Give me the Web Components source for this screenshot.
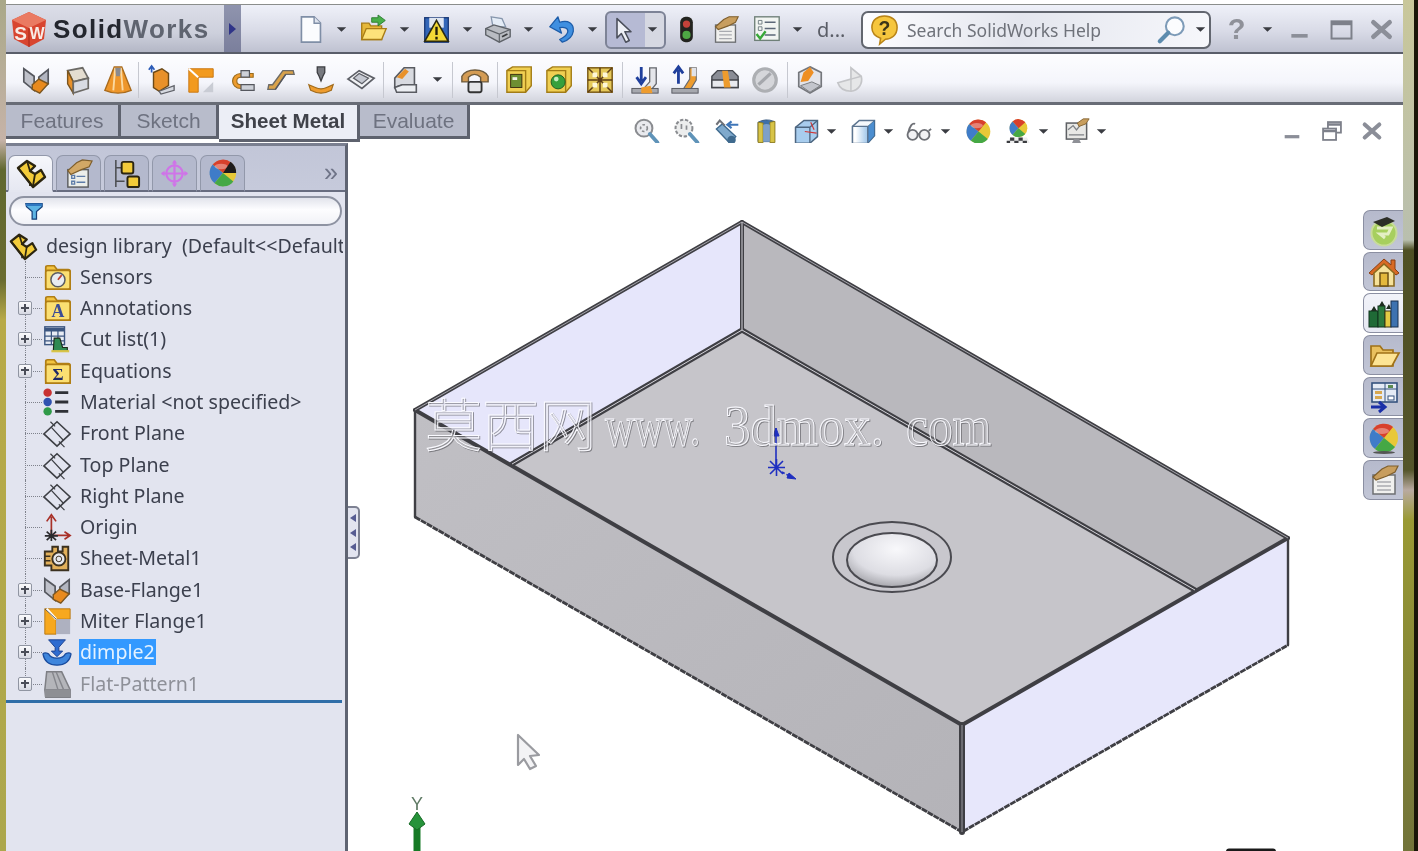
<!DOCTYPE html>
<html lang="en">
<head>
<meta charset="utf-8">
<title>SolidWorks</title>
<style>
  html, body { margin: 0; height: 100%; overflow: hidden; }
  body {
    font-family: "Liberation Sans", Arial, sans-serif;
    background:
      linear-gradient(#1a1608, #1a1608) right top / 4px 100% no-repeat,
      linear-gradient(#c9c79a 0, #b9bfae 240px, #4f5024 250px, #54552a 470px, #b9aaa0 490px, #9a9a34 520px, #72743a 851px) right top / 15px 100% no-repeat,
      linear-gradient(#a9a888 0, #c6b3a8 140px, #60682f 170px, #6a6c30 280px, #b8aa48 320px, #aca74c 851px) left top / 6px 100% no-repeat,
      #a9a878;
  }
</style>
</head>
<body>
<sw-app></sw-app>
<script>
const PART = `<path d="M3 11 12 4l8 5-5 5 5 3 6-4 4 7-12 10Z" fill="#f2cb3a" stroke="#2b2510" stroke-width="2.4" stroke-linejoin="round"/><path d="M3 11l12 15v3M12 4l3 10M20 17l-2 12" fill="none" stroke="#2b2510" stroke-width="1.8"/>`;
const BALL = `<circle cx="16" cy="16" r="14" fill="#e8c838"/><path d="M16 16 5 7A14 14 0 0 1 25 5Z" fill="#d8402c"/><path d="M16 16 5 7A14 14 0 0 0 7 27Z" fill="#3f7cc8"/><path d="M16 16 7 27A14 14 0 0 0 27 25Z" fill="#45a845"/><ellipse cx="14" cy="9" rx="7" ry="3" fill="#fff" opacity=".35"/>`;
const FOLDER = `<path d="M4 29V6q0-2 2-2h7l3 4h12q2 0 2 2v19Z" fill="#f3c440" stroke="#b07e14" stroke-width="1.8"/><rect x="4" y="9" width="26" height="20" rx="2" fill="#fbdf72" stroke="#b07e14" stroke-width="1.8"/>`;
const PLANE = `<path d="M16 4 30 17 16 30 2 17Z" fill="none" stroke="#3d3f44" stroke-width="1.7"/><path d="M9 4 14 9M18 25l6 6M10 10 23 24" stroke="#3d3f44" stroke-width="1.3"/>`;
const FLANGE = `<path d="M3 4 14 12V27L3 18Z" fill="#bfc1ca" stroke="#55575e" stroke-width="1.8"/><path d="M29 5 19 13V27L29 20Z" fill="#b2b5c0" stroke="#55575e" stroke-width="1.8"/><path d="M12 21 19 15 29 20 20 30 12 26Z" fill="#e88a1e" stroke="#7a5520" stroke-width="1.5"/>`;
const CARET_SVG = `<path d="M4 6 16 6 10 12Z" fill="#3a3c42"/>`;

const ICONS = {
  "new": `<path d="M6 2H20L27 9V30H6Z" fill="#fbfcfe" stroke="#7f8ea6" stroke-width="1.8"/><path d="M20 2V9H27" fill="#dfe4ee" stroke="#7f8ea6" stroke-width="1.6"/>`,
  "open": `<path d="M3 27V9h8l2 3h12v15Z" fill="#e6b83a" stroke="#a87c16" stroke-width="1.5"/><path d="M3 27 8 15H30L25 27Z" fill="#fde27a" stroke="#a87c16" stroke-width="1.5"/><path d="M14 3h7V0l8 6-8 6V8h-7Z" fill="#48b04a" stroke="#2a7a30"/>`,
  "save": `<rect x="3" y="3" width="26" height="27" fill="#3366b8" stroke="#1b3a78" stroke-width="1.5"/><rect x="8" y="3" width="16" height="11" fill="#dfe6f2"/><path d="M16 6 29 29H3Z" fill="#f3d935" stroke="#2c2a10" stroke-width="1.7"/><path d="M16 13v9M16 24v3" stroke="#221f0a" stroke-width="2.6"/>`,
  "print": `<path d="M9 2 21 4 25 13H11Z" fill="#e4ecf6" stroke="#8696ac" stroke-width="1.4"/><path d="M3 15 12 11 30 16V24L18 30 3 22Z" fill="#b9bcc2" stroke="#5e6268" stroke-width="1.5"/><path d="M3 15 18 21 30 16M18 21v9" fill="none" stroke="#5e6268" stroke-width="1.3"/><path d="M21 24l6-3" stroke="#3a3c40" stroke-width="2"/>`,
  "undo": `<path d="M3 13 12 2l2 6c9-3 16 1 15 10-1 6-6 10-12 12l-3-3c6-3 9-6 9-9 0-4-4-5-9-4l2 6Z" fill="#3f8fe0" stroke="#1d5ca8" stroke-width="1.4" stroke-linejoin="round"/>`,
  "select": `<path d="M8 3V25L13 20 18 30 22 28 17 18H24Z" fill="#eef0f6" stroke="#4a4e5a" stroke-width="1.8" stroke-linejoin="round"/>`,
  "light": `<rect x="9" y="2" width="14" height="28" rx="6" fill="#23241f"/><circle cx="16" cy="10" r="4" fill="#c4423a"/><circle cx="16" cy="22" r="4.5" fill="#4ea844"/>`,
  "options": `<rect x="5" y="11" width="22" height="19" fill="#f0f0ee" stroke="#6d6f72" stroke-width="1.5"/><path d="M9 18h14M9 22h14M9 26h14" stroke="#a9abb0" stroke-width="1.4"/><path d="M5 13 14 5 20 2 30 2 27 8 19 12 8 16Z" fill="#c89e5e" stroke="#7e5e2c" stroke-width="1.2"/>`,
  "checklist": `<rect x="3" y="2" width="27" height="26" fill="#f2f5f2" stroke="#6f8078" stroke-width="1.5"/><path d="M7 6h4v4H7ZM7 13h4v4H7Z" fill="none" stroke="#6d7a80"/><path d="M14 8h12M14 15h12M14 22h12" stroke="#5c6878" stroke-width="1.6"/><path d="M5 21 9 26 15 18" fill="none" stroke="#38a838" stroke-width="2.6"/>`,
  "helpbubble": `<path d="M3 14C3 6 9 2 16 2s13 4 13 12-6 12-12 12l-6 5 1-6C6 23 3 19 3 14Z" fill="#f6c63e" stroke="#b98418" stroke-width="1.6"/><text x="16" y="22" font-family="Liberation Sans" font-weight="700" font-size="20" text-anchor="middle" fill="#3c3418">?</text>`,
  "mag": `<circle cx="19" cy="12" r="9.5" fill="#fbfcfe" stroke="#7d9bb8" stroke-width="2.2"/><path d="M12 19 3 28" stroke="#5d8cae" stroke-width="4.5" stroke-linecap="round"/>`,
  "qmark": `<text x="16" y="27" font-family="Liberation Sans" font-weight="700" font-size="32" text-anchor="middle" fill="#8f9199">?</text>`,
  "min": `<path d="M7 23H25" stroke="#8b8e98" stroke-width="4"/>`,
  "max": `<rect x="5" y="7" width="22" height="19" fill="none" stroke="#7d808a" stroke-width="2.2"/><path d="M5 9H27" stroke="#7d808a" stroke-width="4.5"/>`,
  "close": `<path d="M7 8 25 24M25 8 7 24" stroke="#8b8e98" stroke-width="5" stroke-linecap="round"/>`,
  "restore": `<rect x="11" y="5" width="16" height="13" fill="none" stroke="#7d808a" stroke-width="2.2"/><rect x="5" y="13" width="16" height="14" fill="#fff" stroke="#7d808a" stroke-width="2.2"/><path d="M5 16H21M11 8H27" stroke="#7d808a" stroke-width="3"/>`,

  "baseflange": FLANGE,
  "extrude": `<path d="M6 6 22 3 28 14 12 18Z" fill="#e4ddd0" stroke="#6c6a66" stroke-width="1.8"/><path d="M6 6V20L12 30V18Z" fill="#e8912a" stroke="#7a5520" stroke-width="1.5"/><path d="M12 18 28 14V25L12 30Z" fill="#d8dbe2" stroke="#6c6a66" stroke-width="1.8"/>`,
  "loft": `<path d="M12 2H20L30 27Q16 33 2 27Z" fill="#ee962a" stroke="#a86a1c" stroke-width="1.5"/><path d="M13 3 11 27M19 3 21 27" stroke="#fbd9a0" stroke-width="2"/><path d="M13 3H19L18 12H14Z" fill="#8a8a8e"/>`,
  "edgeflange": `<path d="M8 8 17 4 24 9V22L14 28 8 24Z" fill="#e8912a" stroke="#6c4a18" stroke-width="1.5"/><path d="M14 28 30 22V27L16 31Z" fill="#d6d9e0" stroke="#5f6168" stroke-width="1.4"/><path d="M6 8V2M3 5 6 1 9 5" fill="none" stroke="#2c5cb8" stroke-width="1.8"/>`,
  "miter": `<path d="M3 4H29V13H13V29H3Z" fill="#f29a1e" stroke="#c9750f" stroke-width="1"/><path d="M3 4 13 13" stroke="#fff" stroke-width="2.2"/><path d="M18 29 29 18V29Z" fill="#c9ccd4"/>`,
  "hem": `<path d="M29 9H16C4 9 4 25 16 25H29V21H16C10 21 10 13 16 13H29Z" fill="#ee9c2e" stroke="#9a6c1c" stroke-width="1.2"/><path d="M16 6H25V13H16ZM16 21H30V27H16Z" fill="#cdd0d8" stroke="#55575e" stroke-width="1.3"/>`,
  "jog": `<path d="M2 26 10 26 21 10H30L29 6H18L7 21 3 21Z" fill="#d9a24a" stroke="#6c6a66" stroke-width="1.5"/><path d="M10 26 21 10" stroke="#55575e" stroke-width="1.5"/>`,
  "formtool": `<path d="M12 2H20V8L18 12 16 17 14 12 12 8Z" fill="#787a80" stroke="#3d3e42" stroke-width="1.4"/><path d="M3 21 10 24Q16 27 22 24L29 21 27 27Q16 33 5 27Z" fill="#ee9c2e" stroke="#a26c1c" stroke-width="1.3"/>`,
  "pyramid": `<path d="M2 15 14 6 30 14 17 25Z" fill="#f2f3f6" stroke="#5d5f66" stroke-width="1.8"/><path d="M8 14 14 9 24 14 17 20Z" fill="#c6c9d2" stroke="#5d5f66" stroke-width="1.3"/>`,
  "corner": `<path d="M4 14 14 3H25V21H12L4 24Z" fill="#d8dae0" stroke="#5a5c62" stroke-width="1.7"/><path d="M6 13 15 4 19 7 12 15Z" fill="#e8912a"/><path d="M4 24 12 21H27V29H6Z" fill="#eceef2" stroke="#5a5c62" stroke-width="1.7"/>`,
  "hook": `<path d="M2 12C7 3 25 3 30 12V18H22V13C18 9 13 9 9 13V18H2Z" fill="#d49c54" stroke="#6c5a3c" stroke-width="1.5"/><rect x="9" y="18" width="14" height="11" rx="2" fill="#e4e5e8" stroke="#333" stroke-width="2"/>`,
  "boxa": `<path d="M2 6 8 2H28V22L22 29H2Z" fill="#f0cf52" stroke="#a27c16" stroke-width="1.5"/><path d="M2 6H22V29" fill="none" stroke="#a27c16" stroke-width="1.5"/><rect x="6" y="10" width="12" height="14" fill="#6d8f32" stroke="#3c2f10"/><rect x="8" y="13" width="5" height="3" fill="#f3f3e8"/>`,
  "boxb": `<path d="M2 6 8 2H28V22L22 29H2Z" fill="#f0cf52" stroke="#a27c16" stroke-width="1.5"/><path d="M2 6H22V29" fill="none" stroke="#a27c16" stroke-width="1.5"/><circle cx="14" cy="18" r="7.5" fill="#37a03c" stroke="#1d5a22"/><circle cx="12" cy="15" r="2.5" fill="#c4eec0"/>`,
  "boxc": `<rect x="3" y="3" width="26" height="26" fill="#e6c95a" stroke="#7c5c18" stroke-width="1.6"/><path d="M3 3 29 29M29 3 3 29M16 3V29M3 16H29" stroke="#5e3c14" stroke-width="1.6"/><path d="M8 8h5v5H8ZM19 8h5v5h-5ZM8 19h5v5H8ZM19 19h5v5h-5Z" fill="#fff7d8"/>`,
  "bendd": `<path d="M12 2V17M7 13 12 20 17 13" fill="none" stroke="#1f3f9c" stroke-width="3"/><path d="M21 3H28V20L23 26H14L21 18Z" fill="#e4e5ea" stroke="#66686e" stroke-width="1.4"/><rect x="2" y="25" width="28" height="5" fill="#a6a8ae" stroke="#55575e"/><path d="M12 24 22 22 24 30H12Z" fill="#ee9c2e"/>`,
  "bendu": `<path d="M9 20V5M4 9 9 2 14 9" fill="none" stroke="#1f3f9c" stroke-width="3"/><path d="M21 3H28V16L22 26H14L21 15Z" fill="#ee9c2e" stroke="#66686e" stroke-width="1.2"/><path d="M23 3H28V12H23Z" fill="#e0e2e8"/><rect x="2" y="25" width="28" height="5" fill="#a6a8ae" stroke="#55575e"/>`,
  "rip": `<path d="M2 12 8 6H24L30 12V24H2Z" fill="#8a8d96" stroke="#44464c" stroke-width="1.5"/><path d="M2 16H30V24H2Z" fill="#e8e9ee" stroke="#44464c" stroke-width="1.5"/><path d="M13 6H19L22 24H15Z" fill="#ee9c2e"/>`,
  "disabled": `<circle cx="16" cy="16" r="12" fill="#d5d6da" stroke="#adafb3" stroke-width="3.4"/><path d="M9 21 22 9" stroke="#a5a7ac" stroke-width="3.4"/>`,
  "hexa": `<path d="M16 2 28 8V23L16 30 4 23V8Z" fill="#e3e4ea" stroke="#75777c" stroke-width="1.8"/><path d="M16 2 9 8 6 18 14 17 20 8Z" fill="#ee8f24"/><path d="M6 22 18 18 27 22 16 29Z" fill="#c3c5cc" stroke="#75777c"/>`,
  "ghost": `<path d="M3 19 17 15V3L28 12C30 20 25 27 17 28 10 28 5 25 3 19Z" fill="#e6e7e8" stroke="#c4c5c8" stroke-width="1.8"/><path d="M17 15 28 12M17 15V28" stroke="#c4c5c8" stroke-width="1.5"/>`,

  "zoomfit": `<circle cx="13" cy="12" r="10" fill="#e9eaee" stroke="#8a8c90" stroke-width="2.4"/><circle cx="13" cy="12" r="4" fill="none" stroke="#8a8c90" stroke-dasharray="3 2.5" stroke-width="2"/><path d="M20 19 29 29" stroke="#5f93b8" stroke-width="4.5" stroke-linecap="round"/>`,
  "zoomarea": `<circle cx="13" cy="12" r="10" fill="#eceded" stroke="#8a8c90" stroke-width="2.4" stroke-dasharray="4 2"/><path d="M10 7v6M16 9v5" stroke="#8a8c90" stroke-width="2"/><path d="M20 19 29 29" stroke="#5f93b8" stroke-width="4.5" stroke-linecap="round"/>`,
  "prevview": `<path d="M4 13 11 7 27 22 20 30Z" fill="#7fa9cc" stroke="#3f6a8e" stroke-width="1.6"/><path d="M4 8l4-5 6 6" fill="none" stroke="#6f7278" stroke-width="2.4"/><path d="M30 8H18M22 4 17 8 22 12" fill="none" stroke="#3f76b8" stroke-width="2.6"/><circle cx="22" cy="26" r="5" fill="#3f6a8e"/>`,
  "section": `<path d="M6 5Q15 0 25 4V28H6Z" fill="#3e70a8" stroke="#2c5078"/><path d="M6 5V29H12V6ZM20 5V29H26V4Z" fill="#d8c448" stroke="#877416"/><path d="M12 8Q16 6 20 8V28H12Z" fill="#7ea0c8"/>`,
  "viewor": `<path d="M3 11 13 3H29V22L20 30H3Z" fill="#a8cdee" stroke="#4d6680" stroke-width="1.8"/><path d="M3 11H20V30M20 11 29 3" fill="none" stroke="#4d6680" stroke-width="1.6"/><path d="M21 5 25 14M14 16 28 18" stroke="#d03838" stroke-width="1.4"/>`,
  "display": `<path d="M3 10 11 3H29V21L21 30H3Z" fill="#f6f9fc" stroke="#5d7590" stroke-width="1.8"/><path d="M21 10 29 3V21L21 30Z" fill="#4c8ed0" stroke="#3e6a92"/><path d="M3 10H21V30H3Z" fill="url(#boxfade)" stroke="#5d7590" stroke-width="1.6"/><defs><linearGradient id="boxfade"><stop offset=".2" stop-color="#fff"/><stop offset="1" stop-color="#9fc6ea"/></linearGradient></defs>`,
  "hide": `<circle cx="9" cy="20" r="6" fill="#f2f2f4" stroke="#6e7076" stroke-width="2.2"/><circle cx="23" cy="20" r="6" fill="#f2f2f4" stroke="#6e7076" stroke-width="2.2"/><path d="M4 17Q7 5 12 7M15 20q2-2 2 0M28 15l3-2" fill="none" stroke="#6e7076" stroke-width="2.2"/>`,
  "ball": BALL,
  "scene": `<circle cx="16" cy="12" r="10.5" fill="#e8c838"/><path d="M16 12 9 4A10.5 10.5 0 0 1 24 5Z" fill="#d8402c"/><path d="M16 12 9 4A10.5 10.5 0 0 0 9 20Z" fill="#3f7cc8"/><path d="M16 12 9 20A10.5 10.5 0 0 0 24 19Z" fill="#45a845"/><path d="M2 31 6 23H26L30 31Z" fill="#eee"/><path d="M6 23h5v4H6ZM16 23h5v4h-5ZM11 27h5v4h-5ZM21 27h5v4h-5ZM2 27h4v4H2Z" fill="#3b3c40"/>`,
  "viewset": `<rect x="4" y="6" width="24" height="19" fill="#e8e8e6" stroke="#5e6064" stroke-width="1.8"/><path d="M6 14 12 9 16 14 20 9M7 20h18" fill="none" stroke="#7d8085" stroke-width="1.6"/><path d="M17 6 24 1H31L27 7 19 10Z" fill="#c89e5e" stroke="#7e5e2c"/><path d="M10 31 13 25H19L22 31Z" fill="#8e9096"/>`,

  "options2": `<rect x="5" y="12" width="21" height="18" fill="#eceeea" stroke="#5b5d60" stroke-width="1.5"/><path d="M9 18h3v3H9ZM9 24h3v3H9ZM14 19h9M14 25h9" stroke="#5e7ca8" stroke-width="1.4" fill="none"/><path d="M5 13 14 5 20 2 30 3 27 9 19 12 8 17Z" fill="#d2a866" stroke="#7e5e2c" stroke-width="1.2"/>`,
  "tree": `<path d="M5 2V30M5 10H11M5 24H14" stroke="#4c4e52" stroke-width="1.6" fill="none"/><rect x="11" y="4" width="12" height="12" rx="2" fill="#f2cb3a" stroke="#2b2510" stroke-width="2"/><rect x="17" y="19" width="12" height="11" rx="2" fill="#f2cb3a" stroke="#2b2510" stroke-width="2"/>`,
  "target": `<circle cx="16" cy="16" r="9" fill="none" stroke="#cf74e8" stroke-width="2.4"/><path d="M16 2V30M2 16H30" stroke="#cf74e8" stroke-width="2.4"/><path d="M16 1 13 5H19ZM16 31 13 27H19ZM1 16 5 13V19ZM31 16 27 13V19Z" fill="#cf74e8"/>`,
  "tabball": `${BALL}<path d="M16 16 24 4A14 14 0 0 1 30 16Z" fill="#1e1c1c"/>`,
  "funnel": `<path d="M3 4H29V9L20 17V29H13V17L4 9Z" fill="#5db4e4" stroke="#17407a" stroke-width="2"/><path d="M3 4H29V8H3Z" fill="#2f78c0"/>`,
  "part": PART,
  "sensors": `${FOLDER}<circle cx="17" cy="19" r="7.5" fill="#e8ecf2" stroke="#5a5c62" stroke-width="1.6"/><path d="M17 19 21 14" stroke="#c04030" stroke-width="1.8"/>`,
  "annot": `${FOLDER}<text x="17" y="26" font-family="Liberation Serif" font-weight="700" font-size="19" text-anchor="middle" fill="#3c4d96">A</text>`,
  "cutlist": `<rect x="3" y="3" width="21" height="19" fill="#e8ecf4" stroke="#3c5680" stroke-width="1.5"/><path d="M3 6H24" stroke="#3c5680" stroke-width="4"/><path d="M3 13H24M3 18H24M10 6V22M17 6V22" stroke="#3c5680" stroke-width="1.3"/><path d="M13 15 19 15 22 25H27V29H12Z" fill="#2f8a52" stroke="#1c2a18" stroke-width="1.2"/><path d="M10 29H29" stroke="#d8c448" stroke-width="2.4"/>`,
  "equations": `${FOLDER}<text x="17" y="26" font-family="Liberation Serif" font-weight="700" font-size="18" text-anchor="middle" fill="#1f2a66">Σ</text>`,
  "material": `<circle cx="6" cy="6" r="4.5" fill="#c83232"/><circle cx="6" cy="16" r="4.5" fill="#2f52b0"/><circle cx="6" cy="26" r="4.5" fill="#2f9a48"/><path d="M14 6H28M14 16H28M14 26H28" stroke="#2e3036" stroke-width="3"/>`,
  "plane": PLANE,
  "origin": `<path d="M10 26V5M5 10 10 3 15 10" fill="none" stroke="#a83028" stroke-width="1.8"/><path d="M12 25H29M24 21 30 25 24 29" fill="none" stroke="#a83028" stroke-width="1.8"/><path d="M5 21 15 30M15 21 5 30M10 19V31M3 25.5H17" stroke="#2b2b2e" stroke-width="1.8"/>`,
  "sheetmetal": `<path d="M6 9H11V4H17V9H22V4H28V29H10V24H3V9Z" fill="#e2b05a" stroke="#3b3120" stroke-width="2"/><circle cx="18" cy="17" r="7" fill="#e6e8ee" stroke="#3b3120" stroke-width="2"/><circle cx="18" cy="17" r="3" fill="none" stroke="#3b3120"/><path d="M3 14H9M3 19H9" stroke="#3b3120" stroke-width="1.6"/>`,
  "miterbig": `<path d="M3 3H30V14H15V30H3Z" fill="#f7a81e" stroke="#b87812" stroke-width="1"/><path d="M5 3 15 14" stroke="#fff" stroke-width="2.4"/><path d="M15 14H30V30H15Z" fill="#aeb1c0"/><path d="M15 14 3 3" stroke="#55504a"/>`,
  "dimplebig": `<path d="M7 3H25L18 11V15H22L16 21 10 15H14V11Z" fill="#2f6cd0" stroke="#1a3f8e"/><path d="M1 18Q3 16 7 18C10 24 22 24 25 18Q29 16 31 18 29 30 16 30 3 30 1 18Z" fill="#3f86dc" stroke="#1a4c9e" stroke-width="1.3"/>`,
  "flat": `<path d="M5 3H21L30 22V30H4L3 22Z" fill="#b4b5ba" stroke="#7e7f84" stroke-width="1.6"/><path d="M3 22H30M11 3 17 22M15 3 23 22" stroke="#85868c" stroke-width="1.5" fill="none"/><path d="M3 22V30H30V22Z" fill="#8e8f94"/>`,

  "sp": `<circle cx="16" cy="19" r="12.5" fill="#a7cf5e" stroke="#c8dc98" stroke-width="2"/><path d="M9 14H23L20 20H12L17 24" fill="none" stroke="#e4efc4" stroke-width="3"/><path d="M5 8 19 3 27 7 14 13Z" fill="#2c2e26"/>`,
  "home": `<path d="M1 17 16 3 23 9V4H27V13L31 17 28 19 16 8 4 19Z" fill="#d86a24" stroke="#8a3f12"/><path d="M6 17V30H26V17L16 8Z" fill="#f6e29a" stroke="#8a6a1e" stroke-width="1.6"/><rect x="12" y="17" width="8" height="13" fill="#e4b83c" stroke="#6c5014" stroke-width="1.5"/>`,
  "library": `<rect x="1" y="14" width="9" height="16" fill="#1f6a36" stroke="#10321c"/><rect x="10" y="9" width="7" height="21" fill="#2d7a3e" stroke="#10321c"/><rect x="17" y="14" width="6" height="16" fill="#e4cb45" stroke="#3d3412"/><rect x="23" y="4" width="7" height="26" fill="#3d72b0" stroke="#18304e"/><path d="M3 14l3-5 3 5M11 9l3-5 3 5M18 12l3-5 2 5" fill="#1e2c20"/>`,
  "folderopen": `<path d="M3 27V7h9l3 4h10v16Z" fill="#e9c05e" stroke="#a07218" stroke-width="1.7"/><path d="M3 27 9 14H31L24 27Z" fill="#fde494" stroke="#a07218" stroke-width="1.7"/>`,
  "palette": `<rect x="4" y="2" width="25" height="19" fill="#e5ebf5" stroke="#34527e" stroke-width="1.6"/><path d="M4 8H29M17 2V21" stroke="#34527e"/><rect x="7" y="10" width="7" height="3" fill="#d8a850"/><rect x="7" y="15" width="7" height="3" fill="#d8a850"/><rect x="20" y="4" width="5" height="3" fill="#5a8a50"/><rect x="20" y="15" width="6" height="4" fill="#fff" stroke="#34527e"/><path d="M3 26H15M11 21l6 5-6 5" fill="none" stroke="#1a2fa8" stroke-width="3"/>`,
  "ballshadow": `${BALL}<ellipse cx="16" cy="30.5" rx="11" ry="1.5" fill="#555"/>`,
};

// small base so each element only writes style() and render()
class SwElement extends HTMLElement {
  constructor() {
    super();
    this.attachShadow({ mode: "open" });
  }
  connectedCallback() {
    this.shadowRoot.innerHTML = `<style>${this.style()}</style>${this.render()}`;
  }
  style() { return ""; }
  render() { return "<slot></slot>"; }
}

class SwIcon extends SwElement {
  style() {
    const size = this.getAttribute("size") || 30;
    return `:host { display: block; width: ${size}px; height: ${size}px; flex: none; }
            svg { display: block; width: 100%; height: 100%; overflow: visible; }`;
  }
  render() {
    return `<svg viewBox="0 0 32 32">${ICONS[this.getAttribute("name")] || ""}</svg>`;
  }
}

class SwCaret extends SwElement {
  style() { return `:host { display: block; width: 11px; height: 11px; flex: none; }
                    svg { display: block; width: 100%; height: 100%; }`; }
  render() { return `<svg viewBox="3 4 14 10">${CARET_SVG}</svg>`; }
}

class SwTool extends SwElement {
  style() {
    const w = this.getAttribute("w") || 40;
    const cell = this.getAttribute("cell") || 30;
    const caretGap = this.getAttribute("gap") || 11;
    return `:host { display: flex; align-items: center; width: ${w}px; height: 34px; flex: none; }
            .icon { width: ${cell}px; display: flex; justify-content: center; flex: none; }
            sw-caret { margin-left: ${caretGap}px; }`;
  }
  render() {
    const size = this.getAttribute("size") || 29;
    return `<div class="icon"><sw-icon name="${this.getAttribute("icon")}" size="${size}"></sw-icon></div>
            ${this.hasAttribute("caret") ? "<sw-caret></sw-caret>" : ""}`;
  }
}

class SwSep extends SwElement {
  style() { return `:host { display: block; width: 1px; height: 36px; margin: 0 2px; background: #c6c8d0; flex: none; }
                    :host([tight]) { margin: 0 2px 0 0; }`; }
}

class SwTitlebar extends SwElement {
  style() {
    return `:host { display: flex; align-items: center; height: 50px; margin-top: 4px; box-sizing: border-box;
                    background: linear-gradient(#eff1f9, #d9dbe7 55%, #bfc2d1); border-bottom: 2px solid #5a5e6a;
                    border-top: 1px solid #8b8e8c; }
            .brand { width: 218px; height: 100%; display: flex; align-items: center; padding-left: 5px; gap: 6px; box-sizing: border-box;
                     background: linear-gradient(#dcdee8, #cdd0dc 60%, #b4b7c6); flex: none; }
            .word { font: 700 26px "Liberation Sans", Arial, sans-serif; letter-spacing: 1.4px; color: #23262e; margin-top: 1px; }
            .word span { color: #5f6470; }
            .more { width: 17px; height: 100%; display: flex; align-items: center; justify-content: center; flex: none;
                    background: linear-gradient(#8f94ae, #7b7f9c); }
            .more i { border-left: 7px solid #2f3488; border-top: 6px solid transparent; border-bottom: 6px solid transparent; }
            .tools { display: flex; align-items: center; margin-left: 54px; padding-top: 2px; }
            .select { width: 61px; height: 38px; box-sizing: border-box; border: 2px solid #7d8396; border-radius: 6px; display: flex;
                      align-items: center; background: linear-gradient(90deg, #b6bad4 0 38px, #d6d8e2 38px); flex: none; }
            .select sw-icon { margin-left: 3px; }
            .select sw-caret { margin-left: 9px; }
            .dots { font: 20px "Noto Sans", sans-serif; color: #5a5d66; width: 44px; margin-left: 6px; flex: none; }
            .search { width: 350px; height: 38px; box-sizing: border-box; border: 2px solid #62666f; border-radius: 7px; flex: none;
                      background: linear-gradient(100deg, #fdfdff, #e4e6ee 45%, #f6f7fb); display: flex; align-items: center; padding-left: 6px; }
            .search span { font: 17.5px "Noto Sans", sans-serif; color: #6f727a; margin-left: 7px; flex: 1; }
            .search sw-caret { margin: 0 3px 0 8px; }
            .window { display: flex; align-items: center; margin-left: 10px; }`;
  }
  render() {
    return `<div class="brand"><svg width="36" height="36" viewBox="0 0 36 36" style="flex:none">
        <path d="M1 9 18 1 35 9 33 28 18 36 3 28Z" fill="#d8452f"/><path d="M1 9 18 17 35 9 18 1Z" fill="#ea7a62"/>
        <path d="M18 17V36" stroke="#a62a1a"/>
        <text x="9.500" y="29" font-family="Liberation Sans" font-weight="700" font-size="19" text-anchor="middle" fill="#f8ece6">S</text>
        <text x="26" y="28" font-family="Liberation Sans" font-weight="700" font-size="16" text-anchor="middle" fill="#f8ece6">W</text></svg>
        <div class="word">Solid<span>Works</span></div></div>
      <div class="more"><i></i></div>
      <div class="tools">
        <sw-tool icon="new" caret w="63"></sw-tool>
        <sw-tool icon="open" caret w="63"></sw-tool>
        <sw-tool icon="save" caret w="61"></sw-tool>
        <sw-tool icon="print" caret w="64"></sw-tool>
        <sw-tool icon="undo" caret w="59"></sw-tool>
        <div class="select"><sw-icon name="select" size="28"></sw-icon><sw-caret></sw-caret></div>
        <sw-tool icon="light" w="40" cell="40"></sw-tool>
        <sw-tool icon="options" w="39" cell="39"></sw-tool>
        <div style="width:6px"></div>
        <sw-tool icon="checklist" caret w="60"></sw-tool>
        <div class="dots">d...</div>
        <div class="search"><sw-icon name="helpbubble" size="31"></sw-icon><span>Search SolidWorks Help</span>
          <sw-icon name="mag" size="30"></sw-icon><sw-caret></sw-caret></div>
        <div class="window">
          <sw-tool icon="qmark" caret w="63"></sw-tool>
          <sw-tool icon="min" w="42"></sw-tool>
          <sw-tool icon="max" w="40"></sw-tool>
          <sw-tool icon="close" w="30"></sw-tool>
        </div>
      </div>`;
  }
}

class SwToolbar extends SwElement {
  style() {
    return `:host { display: flex; align-items: center; height: 51px; box-sizing: border-box; padding: 3px 0 0 9px;
                    background: linear-gradient(#fdfdff, #f4f5fb 60%, #d2d4dd); border-bottom: 3px solid #686c76; }`;
  }
  render() {
    const group = (names, w) => names.map(n => `<sw-tool icon="${n}" w="${w}" cell="${w}" size="30"></sw-tool>`).join("");
    return group(["baseflange", "extrude", "loft"], 41) + `<sw-sep tight></sw-sep>`
      + group(["edgeflange", "miter", "hem", "jog", "formtool", "pyramid"], 40) + `<sw-sep></sw-sep>`
      + `<sw-tool icon="corner" caret w="64" cell="40" gap="6" size="30"></sw-tool><sw-sep></sw-sep>`
      + group(["hook"], 40) + `<sw-sep></sw-sep>`
      + group(["boxa", "boxb", "boxc"], 40) + `<sw-sep></sw-sep>`
      + group(["bendd", "bendu", "rip", "disabled"], 40) + `<sw-sep></sw-sep>`
      + group(["hexa", "ghost"], 40);
  }
}

class SwTab extends SwElement {
  style() {
    const w = this.getAttribute("w");
    return `:host { display: flex; align-items: center; justify-content: center; width: ${w}px; height: 34px; box-sizing: border-box; flex: none;
                    font: 21px "Liberation Sans", Arial, sans-serif; color: #6e7280; background: #b8bccb;
                    border-right: 3px solid #5e626e; border-bottom: 3px solid #5e626e; }
            :host([active]) { height: 37px; padding-bottom: 3px; font-size: 20.6px; font-weight: 700; color: #40424a; background: #eceef6; }`;
  }
}

class SwHeadsup extends SwElement {
  style() {
    return `:host { display: flex; align-items: flex-start; height: 38px; overflow: visible; background: #fff; }
            .tabs { display: flex; align-items: flex-start; flex: none; }
            .hud { display: flex; align-items: center; margin: 9px 0 0 156px; }
            .win { display: flex; align-items: center; margin: 9px 11px 0 auto; }`;
  }
  render() {
    const t = (icon, w, extra = "") => `<sw-tool icon="${icon}" w="${w}" size="27" ${extra}></sw-tool>`;
    return `<div class="tabs">
        <sw-tab w="115">Features</sw-tab><sw-tab w="98">Sketch</sw-tab>
        <sw-tab w="141" active>Sheet Metal</sw-tab><sw-tab w="110">Evaluate</sw-tab>
      </div>
      <div class="hud">
        <sw-tool icon="zoomfit" w="40" cell="40" size="27"></sw-tool>
        <sw-tool icon="zoomarea" w="40" cell="40" size="27"></sw-tool>
        <sw-tool icon="prevview" w="40" cell="40" size="27"></sw-tool>
        <sw-tool icon="section" w="40" cell="40" size="27"></sw-tool>
        <div style="width:5px"></div>
        ${t("viewor", 57, 'caret gap="5"')}
        ${t("display", 55, 'caret gap="5"')}
        ${t("hide", 60, 'caret gap="7"')}
        ${t("ball", 40)}
        ${t("scene", 58, 'caret gap="5"')}
        ${t("viewset", 45, 'caret gap="5"')}
      </div>
      <div class="win">
        <sw-tool icon="min" w="40" cell="40" size="26"></sw-tool>
        <sw-tool icon="restore" w="40" cell="40" size="26"></sw-tool>
        <sw-tool icon="close" w="40" cell="40" size="26"></sw-tool>
      </div>`;
  }
}

class SwTreeRow extends SwElement {
  style() {
    const root = this.hasAttribute("root");
    return `:host { display: flex; align-items: center; height: 31.29px; position: relative; white-space: nowrap; flex: none;
                    font: 19.6px "Noto Sans", sans-serif; color: #3c404e; }
            :host([muted]) { color: #8e9098; }
            .guide { width: 36px; height: 100%; flex: none; position: relative; }
            .guide::before { content: ""; position: absolute; left: 19px; top: 0; bottom: 0; border-left: 1.5px dotted #7f828c; }
            .guide::after { content: ""; position: absolute; left: 19px; width: 17px; top: 50%; border-top: 1.5px dotted #7f828c; }
            :host([last]) .guide::before { bottom: 50%; }
            .box { position: absolute; left: 12px; top: 50%; margin-top: -7px; width: 14px; height: 14px; box-sizing: border-box; z-index: 1;
                   border: 1.5px solid #9095a2; border-radius: 2px; background: linear-gradient(#fbfbfd, #d6d8e2); }
            .box::before { content: ""; position: absolute; left: 2px; right: 2px; top: 4.5px; height: 2px; background: #4a4d58; }
            .box::after { content: ""; position: absolute; top: 2px; bottom: 2px; left: 4.5px; width: 2px; background: #4a4d58; }
            .ic { margin: 0 7px 0 0; }
            .label { padding: 0 1px; line-height: 26px; }
            :host([selected]) .label { background: #3399ff; color: #e4f2ff; }
            ${root ? `.ic { margin: 0 7px 0 2px; }` : ""}`;
  }
  render() {
    const icon = this.getAttribute("icon");
    const root = this.hasAttribute("root");
    return `${root ? "" : `<div class="guide">${this.hasAttribute("plus") ? '<div class="box"></div>' : ""}</div>`}
      <sw-icon class="ic" name="${icon}" size="30"></sw-icon><span class="label"><slot></slot></span>`;
  }
}

class SwPanel extends SwElement {
  style() {
    return `:host { display: flex; flex-direction: column; width: 342px; height: 708px; box-sizing: border-box; overflow: hidden;
                    border-top: 3px solid #7a7f90; border-right: 3px solid #5f6472; background: #e2e4ef; }
            .strip { height: 46px; box-sizing: border-box; padding: 9px 0 0 2px; display: flex; align-items: flex-end; gap: 3px; flex: none;
                     background: linear-gradient(#c2c6d8, #c6cadb); border-bottom: 2px solid #686d80; }
            .tab { width: 45px; height: 37px; margin-bottom: -2px; box-sizing: border-box; border: 1.5px solid #9298aa; border-bottom: 2px solid #686d80;
                   border-radius: 7px 7px 0 0; background: #b4b9cd; display: flex; align-items: center; justify-content: center; flex: none; }
            .tab.on { background: linear-gradient(#f6f7fb, #e6e8f2); border-bottom-color: #e4e6f0; }
            .chev { margin-left: auto; margin-right: 7px; margin-bottom: 8px; font: 25px "Liberation Sans", sans-serif; color: #6f7488; line-height: 20px; }
            .filter { height: 30px; box-sizing: border-box; margin: 4px 3px 4px 3px; border: 2px solid #8e93a2; border-radius: 15px; flex: none;
                      background: linear-gradient(#e2e4ec, #fdfdff 45%, #f1f2f7); padding-left: 13px; display: flex; align-items: center; }
            .tree { display: flex; flex-direction: column; flex: none; height: 470px; margin-right: 2px; overflow: hidden; }
            .line { height: 3px; margin-right: 3px; background: #2f6ea8; flex: none; }`;
  }
  render() {
    return `<div class="strip">
        <div class="tab on"><sw-icon name="part" size="32"></sw-icon></div>
        <div class="tab"><sw-icon name="options2" size="31"></sw-icon></div>
        <div class="tab"><sw-icon name="tree" size="31"></sw-icon></div>
        <div class="tab"><sw-icon name="target" size="29"></sw-icon></div>
        <div class="tab"><sw-icon name="tabball" size="30"></sw-icon></div>
        <div class="chev">»</div>
      </div>
      <div class="filter"><sw-icon name="funnel" size="20"></sw-icon></div>
      <div class="tree"><slot></slot></div>
      <div class="line"></div>`;
  }
}

class SwModel extends SwElement {
  style() {
    return `:host { display: block; width: 1055px; height: 708px; position: relative; background: #fff; overflow: hidden; }
            svg { display: block; }
            .grip { position: absolute; left: 0; top: 363px; width: 10px; height: 49px; border: 2px solid #7d8192; border-left: 0;
                    border-radius: 0 5px 5px 0; background: #e2e4ef; display: flex; flex-direction: column; justify-content: space-evenly; align-items: center; }
            .grip i { border-right: 6px solid #565c92; border-top: 4px solid transparent; border-bottom: 4px solid transparent; }
            .pane { position: absolute; right: 0; top: 67px; display: flex; flex-direction: column; gap: 2px; }
            .pane div { width: 40px; height: 39.7px; box-sizing: border-box; border: 1.5px solid #8b8fa2; border-right: 0; border-radius: 7px 0 0 7px;
                        background: linear-gradient(#b6bacc, #c2c6d6); display: flex; align-items: center; justify-content: center; }
            .pane div.on { background: linear-gradient(#f2f3f9, #e6e8f2); }`;
  }
  render() {
    const edge = "#3f3f44";
    return `<svg width="1055" height="708" viewBox="348 143 1055 708">
      <defs>
        <radialGradient id="dome" cx=".55" cy=".3" r=".8"><stop offset="0" stop-color="#f8f8fb"/><stop offset=".6" stop-color="#dddde3"/><stop offset="1" stop-color="#909096"/></radialGradient>
        <linearGradient id="lw" x1="0" x2="1" y1="0" y2="1"><stop offset="0" stop-color="#c0bfc4"/><stop offset="1" stop-color="#b4b3b8"/></linearGradient>
      </defs>
      <polygon points="742,222 415,410 512,464 742,330" fill="#e6e6fb"/>
      <polygon points="742,222 1288,538 1195,590 742,330" fill="#b9b8bd"/>
      <polygon points="742,330 512,464 962,725 1195,590" fill="#c6c5ca"/>
      <polygon points="415,410 962,725 962,832 415,517" fill="url(#lw)"/>
      <polygon points="962,725 1288,538 1288,645 962,832" fill="#e7e7fb"/>
      <ellipse cx="892" cy="557" rx="59" ry="35" fill="#c8c7cd" stroke="#4a4a50" stroke-width="2"/>
      <ellipse cx="892" cy="560" rx="45" ry="27" fill="url(#dome)" stroke="#4a4a50" stroke-width="2"/>

      <g fill="none" stroke="${edge}" stroke-linecap="round">
        <path d="M742 222 415 410M742 222 1288 538" stroke-width="4"/>
        <path d="M742 330 512 464M742 330 1195 590" stroke-width="5"/>
        <path d="M742 222V330" stroke-width="4"/>
        <path d="M415 410 962 725" stroke-width="4"/>
        <path d="M962 725 1288 538" stroke-width="4"/>
        <path d="M415 410V517M1288 538V645" stroke-width="2.4"/>
        <path d="M962 725V832" stroke-width="6"/>
        <path d="M415 517 962 832 1288 645" stroke-width="2.8" stroke-dasharray="6 .8" stroke-linecap="butt"/>
      </g>
      <g fill="none" stroke="#d3d2d8" stroke-width="1">
        <path d="M742 330 512 464M742 330 1195 590"/>
        <path d="M742 222V330"/>
        <path d="M962 725V832" stroke="#9a9aa0"/>
        <path d="M742 222 415 410M742 222 1288 538" stroke="#c0bfc6" stroke-width=".8"/>
      </g>

      <g stroke="#1f2fc0" fill="#1f2fc0">
        <path d="M776 428V468" stroke-width="1.6" fill="none"/>
        <path d="M776 428 773 436H779Z"/>
        <path d="M770 461 783 474M783 461 770 474M776.5 459V476M768 467.5H785" stroke-width="1.6" fill="none"/>
        <path d="M782 472 795 479" stroke-width="1.6" stroke-dasharray="3 2" fill="none"/>
        <path d="M796 479 787 478 789 473Z"/>
      </g>

      <g fill="#e2e2e8" fill-opacity=".2" stroke="#fafaff" stroke-width="1" style="filter: drop-shadow(1px 1px 0 rgba(70,70,75,.55))">
        <text x="425" y="446" font-family="'Noto Sans CJK SC', sans-serif" font-size="57" font-weight="300">莫西网</text>
        <text x="605" y="445" textLength="95" lengthAdjust="spacingAndGlyphs" font-family="'Liberation Serif', serif" font-size="56">www.</text>
        <text x="724" y="445" textLength="160" lengthAdjust="spacingAndGlyphs" font-family="'Liberation Serif', serif" font-size="56">3dmox.</text>
        <text x="906" y="445" textLength="85" lengthAdjust="spacingAndGlyphs" font-family="'Liberation Serif', serif" font-size="56">com</text>
      </g>

      <path d="M518 735V765L524 759 530 769 536 766 530 756 539 755Z" fill="#f3f3f5" stroke="#9a9ba0" stroke-width="2.2" stroke-linejoin="round"/>

      <text x="417" y="810" font-family="'Liberation Sans', sans-serif" font-size="18" text-anchor="middle" fill="#5f7a64">Y</text>
      <path d="M413.500 828H420.500V851H413.500Z" fill="#167a26"/>
      <path d="M417 812 425 824 417 830 409 824Z" fill="#26933a" stroke="#156a24"/>
      <rect x="1226" y="848.500" width="50" height="6" rx="3" fill="#1a1a1a"/>
    </svg>
    <div class="grip"><i></i><i></i><i></i></div>
    <div class="pane">
      <div><sw-icon name="sp" size="32"></sw-icon></div>
      <div><sw-icon name="home" size="32"></sw-icon></div>
      <div class="on"><sw-icon name="library" size="32"></sw-icon></div>
      <div><sw-icon name="folderopen" size="32"></sw-icon></div>
      <div><sw-icon name="palette" size="32"></sw-icon></div>
      <div><sw-icon name="ballshadow" size="32"></sw-icon></div>
      <div><sw-icon name="options" size="32"></sw-icon></div>
    </div>`;
  }
}

class SwApp extends SwElement {
  style() {
    return `:host { display: block; width: 1397px; margin-left: 6px; height: 851px; overflow: hidden; background: #fff; filter: blur(.4px); }
            .work { display: flex; align-items: flex-start; }`;
  }
  render() {
    return `<sw-titlebar></sw-titlebar>
      <sw-toolbar></sw-toolbar>
      <sw-headsup></sw-headsup>
      <div class="work">
        <sw-panel>
          <sw-tree-row root icon="part">design library&nbsp; (Default&lt;&lt;Default</sw-tree-row>
          <sw-tree-row icon="sensors">Sensors</sw-tree-row>
          <sw-tree-row icon="annot" plus>Annotations</sw-tree-row>
          <sw-tree-row icon="cutlist" plus>Cut list(1)</sw-tree-row>
          <sw-tree-row icon="equations" plus>Equations</sw-tree-row>
          <sw-tree-row icon="material">Material &lt;not specified&gt;</sw-tree-row>
          <sw-tree-row icon="plane">Front Plane</sw-tree-row>
          <sw-tree-row icon="plane">Top Plane</sw-tree-row>
          <sw-tree-row icon="plane">Right Plane</sw-tree-row>
          <sw-tree-row icon="origin">Origin</sw-tree-row>
          <sw-tree-row icon="sheetmetal">Sheet-Metal1</sw-tree-row>
          <sw-tree-row icon="baseflange" plus>Base-Flange1</sw-tree-row>
          <sw-tree-row icon="miterbig" plus>Miter Flange1</sw-tree-row>
          <sw-tree-row icon="dimplebig" plus selected>dimple2</sw-tree-row>
          <sw-tree-row icon="flat" plus muted last>Flat-Pattern1</sw-tree-row>
        </sw-panel>
        <sw-model></sw-model>
      </div>`;
  }
}

customElements.define("sw-icon", SwIcon);
customElements.define("sw-caret", SwCaret);
customElements.define("sw-tool", SwTool);
customElements.define("sw-sep", SwSep);
customElements.define("sw-titlebar", SwTitlebar);
customElements.define("sw-toolbar", SwToolbar);
customElements.define("sw-tab", SwTab);
customElements.define("sw-headsup", SwHeadsup);
customElements.define("sw-tree-row", SwTreeRow);
customElements.define("sw-panel", SwPanel);
customElements.define("sw-model", SwModel);
customElements.define("sw-app", SwApp);
</script>
</body>
</html>
